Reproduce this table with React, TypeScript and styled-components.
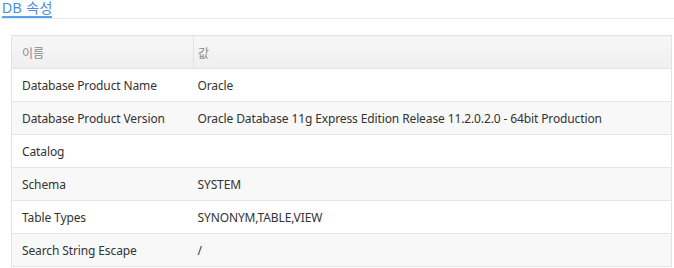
import React from "react";
import styled, { createGlobalStyle } from "styled-components";

const GlobalStyle = createGlobalStyle`
  html, body { margin: 0; padding: 0; background: #fff; }
  body {
    font-family: "Noto Sans", "Noto Sans CJK KR", sans-serif;
    color: #333;
  }
`;

const Page = styled.div`
  width: 674px;
  height: 268px;
  overflow: hidden;
  box-sizing: border-box;
`;

const TabBar = styled.div`
  display: flex;
  align-items: flex-start;
  padding-left: 2px;
  border-bottom: 1px solid #e3e9ef;
  height: 18px;
`;

const Tab = styled.div`
  box-sizing: border-box;
  height: 18px;
  width: 50px;
  padding-top: 1px;
  font-size: 14px;
  line-height: 15px;
  letter-spacing: 0.3px;
  color: #4a90d9;
  border-bottom: 2px solid #5aa0e6;
  font-family: "Liberation Sans", "Noto Sans CJK KR", sans-serif;
  white-space: nowrap;
`;

const TableWrap = styled.div`
  padding: 16px 2px 0 11px;
`;

const Table = styled.table`
  width: 661px;
  border-collapse: collapse;
  border: 1px solid #e2e2e2;
  font-size: 12px;
  letter-spacing: -0.12px;
  table-layout: fixed;
`;

const Column = styled.col<{ $w?: number }>`
  width: ${(p) => (p.$w ? `${p.$w}px` : "auto")};
`;

const HeadCell = styled.th<{ $pad: number }>`
  box-sizing: border-box;
  height: 33px;
  padding: 0 0 0 ${(p) => p.$pad}px;
  text-align: left;
  font-weight: normal;
  color: #8a8a8a;
  background: linear-gradient(#f7f7f7, #efefef);
  border-bottom: 1px solid #e2e2e2;
  border-right: 1px solid #e2e2e2;
  font-family: "Noto Sans CJK KR", "Noto Sans", sans-serif;
`;

const Row = styled.tr<{ $alt: boolean }>`
  background: ${(p) => (p.$alt ? "#f8f8f8" : "#fff")};
  border-bottom: 1px solid #e6e6e6;
`;

const Cell = styled.td<{ $pad: number }>`
  box-sizing: border-box;
  height: 33px;
  padding: 0 0 0 ${(p) => p.$pad}px;
  white-space: nowrap;
  color: #333;
`;

const rows: [string, string][] = [
  ["Database Product Name", "Oracle"],
  ["Database Product Version", "Oracle Database 11g Express Edition Release 11.2.0.2.0 - 64bit Production"],
  ["Catalog", ""],
  ["Schema", "SYSTEM"],
  ["Table Types", "SYNONYM,TABLE,VIEW"],
  ["Search String Escape", "/"],
];

export default function App() {
  return (
    <Page>
      <GlobalStyle />
      <TabBar>
        <Tab>DB 속성</Tab>
      </TabBar>
      <TableWrap>
        <Table>
          <colgroup>
            <Column $w={182} />
            <Column />
          </colgroup>
          <thead>
            <tr>
              <HeadCell $pad={10}>이름</HeadCell>
              <HeadCell $pad={4}>값</HeadCell>
            </tr>
          </thead>
          <tbody>
            {rows.map(([name, value], i) => (
              <Row key={name} $alt={i % 2 === 1}>
                <Cell $pad={10}>{name}</Cell>
                <Cell $pad={4}>{value}</Cell>
              </Row>
            ))}
          </tbody>
        </Table>
      </TableWrap>
    </Page>
  );
}
